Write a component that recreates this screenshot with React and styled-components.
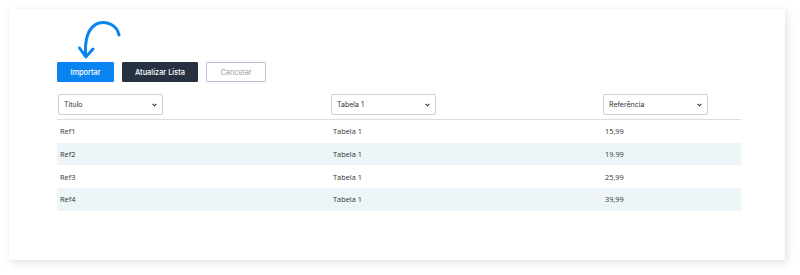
import React from "react";
import styled, { createGlobalStyle } from "styled-components";

const GlobalStyle = createGlobalStyle`
  html, body { margin: 0; padding: 0; background: #ffffff; }
  body { font-family: "Inter", "Open Sans", sans-serif; }
`;

const rows = [
  { ref: "Ref1", tabela: "Tabela 1", valor: "15,99" },
  { ref: "Ref2", tabela: "Tabela 1", valor: "19.99" },
  { ref: "Ref3", tabela: "Tabela 1", valor: "25,99" },
  { ref: "Ref4", tabela: "Tabela 1", valor: "39,99" },
];

const Page = () => (
  <>
    <GlobalStyle />
    <Wrapper>
      <Card>
        <Toolbar>
          <ImportWrap>
            <CurvedArrow />
            <Button $variant="primary" $w={57}>Importar</Button>
          </ImportWrap>
          <Button $variant="dark" $w={76}>Atualizar Lista</Button>
          <Button $variant="outline" $w={60}>Cancelar</Button>
        </Toolbar>
        <Table>
          <HeaderRow>
            <HeadCell><Select label="Titulo" /></HeadCell>
            <HeadCell><Select label="Tabela 1" /></HeadCell>
            <HeadCell><Select label="Referência" /></HeadCell>
          </HeaderRow>
          {rows.map((r, i) => (
            <Row key={r.ref} $striped={i % 2 === 1}>
              <Cell>{r.ref}</Cell>
              <Cell>{r.tabela}</Cell>
              <Cell>{r.valor}</Cell>
            </Row>
          ))}
        </Table>
      </Card>
    </Wrapper>
  </>
);

const Select = ({ label }) => (
  <SelectBox>
    <span>{label}</span>
    <svg width="5" height="4" viewBox="0 0 5 4">
      <path d="M0.6 0.8 L2.5 2.8 L4.4 0.8" fill="none" stroke="#333" strokeWidth="1.1" />
    </svg>
  </SelectBox>
);

const CurvedArrow = () => (
  <ArrowSvg width="48" height="42" viewBox="0 0 48 42">
    <path
      d="M43 15 C41 5 31 1 23 3 C14 6 8.5 16 9.6 35"
      fill="none"
      stroke="#0a84f0"
      strokeWidth="3"
      strokeLinecap="round"
    />
    <path
      d="M3.5 28 L9.8 37 L17 29"
      fill="none"
      stroke="#0a84f0"
      strokeWidth="3"
      strokeLinecap="round"
      strokeLinejoin="round"
    />
  </ArrowSvg>
);

export default Page;

const Wrapper = styled.div`
  width: 800px;
  height: 275px;
  padding: 9px 15px 15px 9px;
  box-sizing: border-box;
`;

const Card = styled.div`
  background: #fff;
  height: 251px;
  width: 776px;
  box-sizing: border-box;
  padding: 53px 44px 0 48px;
  box-shadow: 2px 3px 8px rgba(40, 50, 90, 0.13), 0 0 2px rgba(40, 50, 90, 0.04);
`;

const Toolbar = styled.div`
  display: flex;
  gap: 8px;
  align-items: center;
`;

const ImportWrap = styled.div`
  position: relative;
  display: flex;
`;

const ArrowSvg = styled.svg`
  position: absolute;
  left: 19px;
  top: -42px;
`;

const Button = styled.button`
  width: ${(p) => p.$w}px;
  height: 20px;
  box-sizing: border-box;
  padding: 0;
  font-family: "Inter", sans-serif;
  font-size: 7.4px;
  font-weight: ${(p) => (p.$variant === "outline" ? 400 : 500)};
  border-radius: 1px;
  cursor: pointer;
  background: ${(p) =>
    p.$variant === "primary" ? "#0a84f0" : p.$variant === "dark" ? "#273142" : "#ffffff"};
  color: ${(p) => (p.$variant === "outline" ? "#9aa0ad" : "#ffffff")};
  border: 1px solid
    ${(p) =>
      p.$variant === "primary" ? "#0a84f0" : p.$variant === "dark" ? "#273142" : "#b9c0d4"};
`;

const Table = styled.div`
  margin-top: 12px;
  width: 684px;
`;

const grid = `
  display: grid;
  grid-template-columns: 273px 272px 139px;
`;

const HeaderRow = styled.div`
  ${grid}
  padding-bottom: 4px;
  border-bottom: 1px solid #dedede;
`;

const HeadCell = styled.div`
  padding-left: 1px;
`;

const SelectBox = styled.div`
  width: 105px;
  height: 21px;
  box-sizing: border-box;
  border: 1px solid #cfcfcf;
  border-radius: 2px;
  display: flex;
  align-items: center;
  justify-content: space-between;
  padding: 0 5px 0 5px;
  font-family: "Inter", sans-serif;
  font-size: 7px;
  color: #333;
  background: #fff;
`;

const Row = styled.div`
  ${grid}
  height: 22.7px;
  align-items: center;
  background: ${(p) => (p.$striped ? "#edf5f9" : "transparent")};
`;

const Cell = styled.div`
  padding-left: 3px;
  font-family: "Open Sans", sans-serif;
  font-size: 7.4px;
  color: #333;
`;
